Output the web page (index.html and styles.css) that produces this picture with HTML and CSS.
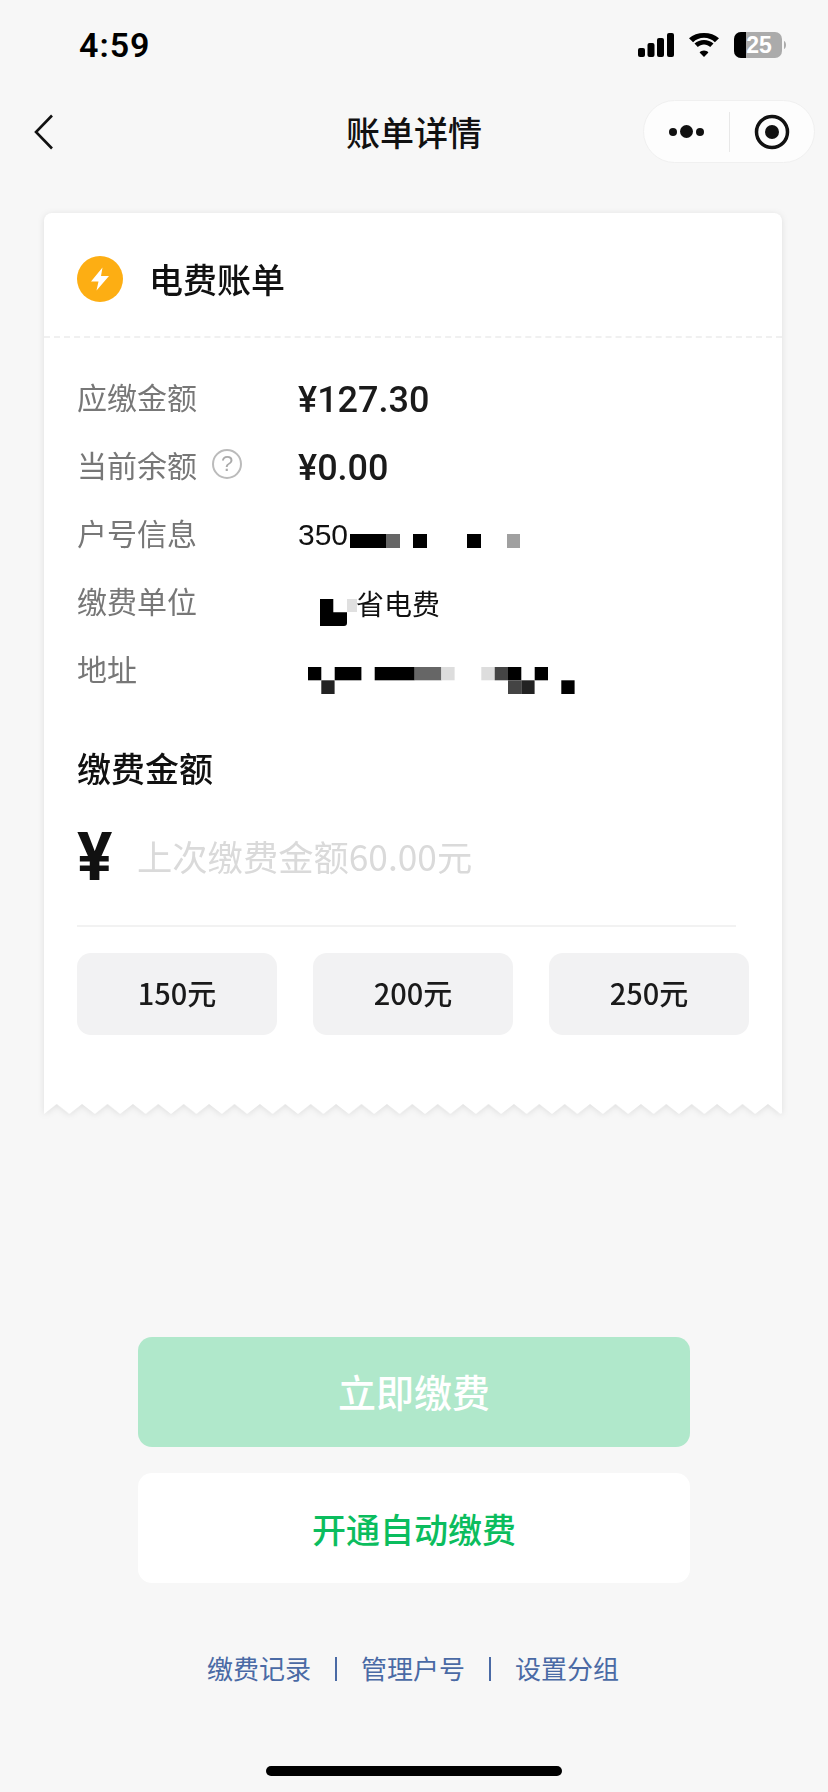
FILE: index.html
```html
<!DOCTYPE html>
<html lang="zh">
<head>
<meta charset="utf-8">
<title>账单详情</title>
<link rel="stylesheet" href="styles.css">
</head>
<body>
<div class="page">
  <div class="status">
    <span class="time">4:59</span>
    <div class="status-icons">
      <svg class="signal" width="36" height="24" viewBox="0 0 36 24"><rect x="0" y="15" width="7" height="9" rx="2"/><rect x="9.5" y="10" width="7" height="14" rx="2"/><rect x="19" y="5" width="7" height="19" rx="2"/><rect x="29" y="0" width="7" height="24" rx="2"/></svg>
      <svg class="wifi" width="32" height="24" viewBox="0 0 32 24"><path d="M16 4.8c-4.2 0-8 1.700-10.900 4.400L1 5.200C4.900 1.800 10.200 0 16 0s11.100 1.800 15 5.200l-4.100 4C24 6.500 20.200 4.800 16 4.800z"/><path d="M16 11.500c-2.400 0-4.500.9-6.200 2.400l-3.300-3.300C9.100 8.200 12.400 7 16 7s6.900 1.200 9.500 3.600l-3.300 3.300c-1.700-1.500-3.800-2.400-6.200-2.400z"/><path d="M16 24l-4.400-4.600c1.100-1.100 2.700-1.800 4.400-1.800s3.300.7 4.400 1.800z"/></svg>
      <svg class="battery" width="52" height="26" viewBox="0 0 52 26"><rect x="0" y="0" width="48" height="26" rx="7" fill="#ababab"/><path d="M7 0h5v26H7a7 7 0 0 1-7-7V7a7 7 0 0 1 7-7z" fill="#000"/><path d="M50 9c1.300.5 2 2.200 2 4s-.7 3.500-2 4z" fill="#ababab"/><text x="25" y="21" text-anchor="middle" class="battery-text">25</text></svg>
    </div>
  </div>

  <div class="nav">
    <svg class="back" width="20" height="36" viewBox="0 0 20 36"><path d="M18 1.500L2 18l16 16.500"/></svg>
    <h1 class="nav-title">账单详情</h1>
    <div class="capsule">
      <div class="capsule-dots"><i class="dot"></i><i class="dot dot-big"></i><i class="dot"></i></div>
      <i class="capsule-sep"></i>
      <svg class="capsule-target" width="36" height="36" viewBox="0 0 36 36"><circle cx="18" cy="18" r="15.500"/><circle class="solid" cx="18" cy="18" r="7"/></svg>
    </div>
  </div>

  <div class="card-wrap">
    <div class="card">
      <div class="card-head">
        <svg class="bolt" width="46" height="46" viewBox="0 0 46 46"><circle cx="23" cy="23" r="23" fill="#fdae13"/><path d="M25.500 11.500L14 25.500h7.500L19.500 34.500 32 20h-8z" fill="#fff"/></svg>
        <span class="card-title">电费账单</span>
      </div>
      <div class="rows">
        <div class="row"><span class="label">应缴金额</span><span class="amount">¥127.30</span></div>
        <div class="row"><span class="label">当前余额<i class="help">?</i></span><span class="amount">¥0.00</span></div>
        <div class="row"><span class="label">户号信息</span><span class="value"><span class="num">350</span><svg class="mask mask-a" width="172" height="14" viewBox="0 0 172 14"><rect x="2" width="36" height="14"/><rect x="38" width="14" height="14" fill="#666"/><rect x="65" width="14" height="14"/><rect x="119" width="14" height="14"/><rect x="159" width="13" height="14" fill="#a0a0a0"/></svg></span></div>
        <div class="row"><span class="label">缴费单位</span><span class="value value-unit"><svg class="mask mask-b" width="37" height="27" viewBox="0 0 37 27"><path d="M0 0h13.300v13.300H27V24a3 3 0 0 1-3 3H0z"/><rect x="27" y="0" width="10" height="13" fill="#e0e0e0"/></svg><span>省电费</span></span></div>
        <div class="row"><span class="label">地址</span><span class="value"><svg class="mask mask-c" width="268" height="27" viewBox="0 0 268 27"><rect width="13.300" height="13.300"/><rect x="13.300" y="13.300" width="13.300" height="13.700" fill="#222"/><rect x="26.700" width="26.700" height="13.300"/><rect x="66.700" width="40" height="13.300"/><rect x="106.700" width="26.700" height="13.300" fill="#666"/><rect x="133.300" width="13.300" height="13.300" fill="#ddd"/><rect x="173.300" width="13.300" height="13.300" fill="#ddd"/><rect x="186.700" width="13.300" height="13.300" fill="#444"/><rect x="200" width="13.300" height="13.300"/><rect x="200" y="13.300" width="13.300" height="13.700" fill="#444"/><rect x="213.300" y="13.300" width="13.300" height="13.700" fill="#222"/><rect x="226.700" width="13.300" height="13.300"/><rect x="253.300" y="13.300" width="13.300" height="13.700"/></svg></span></div>
      </div>
      <div class="pay">
        <h2 class="pay-title">缴费金额</h2>
        <div class="pay-input"><span class="pay-yen">¥</span><span class="placeholder">上次缴费金额60.00元</span></div>
        <div class="options">
          <div class="option">150元</div>
          <div class="option">200元</div>
          <div class="option">250元</div>
        </div>
      </div>
    </div>
    <svg class="teeth" width="738" height="10" viewBox="0 0 738 10">
      <defs><pattern id="tooth" width="25.400" height="10" patternUnits="userSpaceOnUse"><polygon points="0,0 25.400,0 25.400,10 12.700,0 0,10" fill="#fff"/></pattern></defs>
      <rect width="738" height="10" fill="url(#tooth)"/>
    </svg>
  </div>

  <div class="actions">
    <div class="btn btn-primary">立即缴费</div>
    <div class="btn btn-secondary">开通自动缴费</div>
  </div>

  <div class="links">
    <span>缴费记录</span><i class="link-sep"></i><span>管理户号</span><i class="link-sep"></i><span>设置分组</span>
  </div>

  <div class="home"></div>
</div>
</body>
</html>
```

FILE: styles.css
```css
* { box-sizing: border-box; margin: 0; padding: 0; }
html, body { width: 828px; height: 1792px; overflow: hidden; }
body {
  background: #f7f7f7;
  color: #111;
  font-family: "Noto Sans CJK SC", "Noto Sans", sans-serif;
}
i { font-style: normal; display: block; }
.page { display: flex; flex-direction: column; height: 1792px; }

.status { height: 90px; padding: 32px 42px 0 79px; display: flex; justify-content: space-between; align-items: flex-start; }
.time { font: 600 34px/26px Roboto, "Liberation Sans", sans-serif; color: #000; letter-spacing: 1px; }
.status-icons { display: flex; gap: 14px; align-items: center; }
.signal, .wifi { fill: #000; display: block; }
.battery { display: block; }
.battery-text { font: 700 23px "Liberation Sans", sans-serif; fill: #fff; }

.nav { height: 73px; margin-top: 5px; padding: 0 13px 0 34px; display: flex; align-items: center; position: relative; }
.back { fill: none; stroke: #111; stroke-width: 2.600; flex: none; }
.nav-title { position: absolute; left: 0; right: 0; text-align: center; font-size: 34px; line-height: 44px; font-weight: 500; color: #111; }
.capsule { margin-left: auto; width: 172px; height: 63px; border-radius: 32px; background: #fdfdfd; border: 1px solid #f0f0f0; display: flex; align-items: center; position: relative; }
.capsule-dots { width: 85px; display: flex; align-items: center; justify-content: center; gap: 3px; }
.dot { width: 8px; height: 8px; border-radius: 50%; background: #111; }
.dot-big { width: 13px; height: 13px; }
.capsule-sep { width: 1px; height: 40px; background: #e8e8e8; }
.capsule-target { margin-left: 24px; fill: none; stroke: #111; stroke-width: 3.500; }
.capsule-target .solid { fill: #111; stroke: none; }

.card-wrap { margin: 45px 46px 0 44px; filter: drop-shadow(0 1px 3px rgba(0, 0, 0, .1)); }
.card { background: #fff; border-radius: 8px 8px 0 0; height: 891px; }
.teeth { display: block; }
.card-head { height: 125px; padding: 0 33px; display: flex; align-items: center; gap: 26px; border-bottom: 2px dashed #f0f0f0; }
.bolt { flex: none; margin-top: 9px; }
.card-title { font-size: 34px; line-height: 44px; font-weight: 500; color: #111; margin-top: 9px; }

.rows { padding: 25px 33px 0; }
.row { height: 68px; display: flex; align-items: center; }
.label { width: 221px; flex: none; font-size: 30px; line-height: 40px; color: #777; display: flex; align-items: center; margin-top: -2px; }
.help { width: 30px; height: 30px; margin-left: 15px; border: 2px solid #bbb; border-radius: 50%; font: 400 22px/26px "Liberation Sans", sans-serif; color: #aaa; text-align: center; }
.amount { font: 500 36px/44px Roboto, "Noto Sans", sans-serif; color: #1a1a1a; margin-top: 6px; }
.value { display: flex; align-items: center; font-size: 28px; line-height: 36px; color: #111; margin-top: 4px; }
.num { font: 400 30px/36px "Liberation Sans", sans-serif; }
.mask { display: block; flex: none; fill: #000; }
.mask-a { margin-top: 11px; }
.value-unit { padding-left: 22px; }
.value-unit span { margin-left: -1px; }
.mask-b { margin-top: 19px; }
.mask-c { margin-top: 19px; margin-left: 10px; }

.pay { padding: 0 33px; margin-top: 5px; }
.pay-title { font-size: 34px; line-height: 44px; font-weight: 500; color: #111; margin-top: 43px; }
.pay-input { margin-top: 30px; width: 659px; height: 107px; display: flex; align-items: flex-start; gap: 20px; border-bottom: 2px solid #f2f2f2; }
.pay-yen { font: 700 66px/62px Roboto, sans-serif; color: #111; width: 40px; margin-top: 7px; }
.placeholder { font-size: 35.300px; line-height: 44px; margin-top: 14px; color: #dadada; }
.options { display: grid; grid-template-columns: 200px 200px 200px; column-gap: 36px; margin-top: 26px; }
.option { height: 82px; padding-bottom: 4px; border-radius: 14px; background: #f2f2f3; display: flex; align-items: center; justify-content: center; font-size: 29px; font-weight: 500; color: #1a1a1a; }

.actions { margin: 223px 138px 0; display: flex; flex-direction: column; gap: 26px; }
.btn { height: 110px; border-radius: 14px; display: flex; align-items: center; justify-content: center; }
.btn-primary { background: #b0e8cb; color: #fff; font-size: 38px; font-weight: 500; padding-bottom: 4px; }
.btn-secondary { background: #fff; color: #0bbd5e; font-size: 34px; font-weight: 500; }

.links { margin-top: 63px; display: flex; justify-content: center; align-items: center; gap: 24px; font-size: 26px; line-height: 44px; color: #4a6aa5; padding-right: 2px; }
.link-sep { width: 2px; height: 24px; background: #4a6aa5; margin-top: 2px; }

.home { width: 296px; height: 10px; border-radius: 5px; background: #000; margin: 76px auto 0; }
```
